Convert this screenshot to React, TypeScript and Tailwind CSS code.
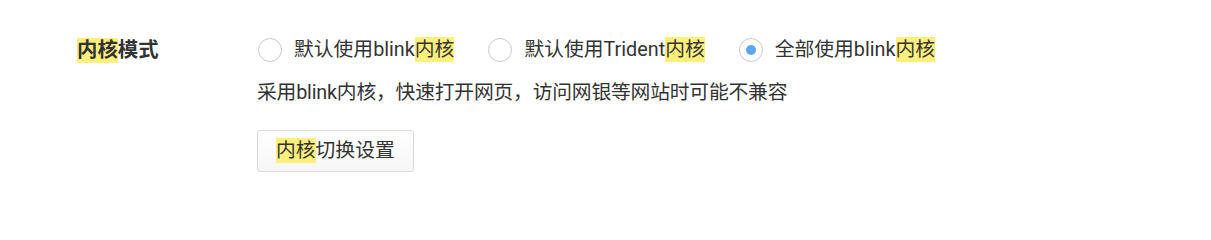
import React from "react";

const font = { fontFamily: 'Roboto, "Noto Sans CJK SC", "Microsoft YaHei", sans-serif' };

function Hl({ children }: { children: React.ReactNode }) {
  return <span className="bg-[#fff07c] inline-block leading-[25px]">{children}</span>;
}

function Radio({ checked, children }: { checked?: boolean; children: React.ReactNode }) {
  return (
    <label className="flex items-center gap-[12px] cursor-pointer">
      <span className="w-[24px] h-[24px] rounded-full border-[1.5px] border-[#cbcbcb] bg-white flex items-center justify-center">
        {checked && <span className="w-[10px] h-[10px] rounded-full bg-[#5ba6f6]" />}
      </span>
      <span>{children}</span>
    </label>
  );
}

export default function App() {
  return (
    <div className="w-[1211px] h-[224px] bg-white text-[#333] text-[19.8px]" style={font}>
      <div className="pt-[36px] pl-[77px] flex">
        <div className="w-[181px] h-[28px] flex items-center font-bold text-[20.4px]">
          <span>
            <Hl>内核</Hl>模式
          </span>
        </div>
        <div className="flex flex-col">
          <div className="h-[28px] flex items-center gap-[34px]">
            <Radio>
              默认使用blink<Hl>内核</Hl>
            </Radio>
            <Radio>
              默认使用Trident<Hl>内核</Hl>
            </Radio>
            <Radio checked>
              全部使用blink<Hl>内核</Hl>
            </Radio>
          </div>
          <div className="mt-[15px] leading-[28px] -ml-[1px] tracking-[-0.2px]">
            采用blink内核，快速打开网页，访问网银等网站时可能不兼容
          </div>
          <div className="mt-[23px] -ml-[1px]">
            <button className="h-[42px] px-[18px] border border-[#dcdcdc] rounded-[3px] bg-gradient-to-b from-white to-[#f6f6f6] text-[#333] text-[19.8px] flex items-center">
              <span>
                <Hl>内核</Hl>切换设置
              </span>
            </button>
          </div>
        </div>
      </div>
    </div>
  );
}
